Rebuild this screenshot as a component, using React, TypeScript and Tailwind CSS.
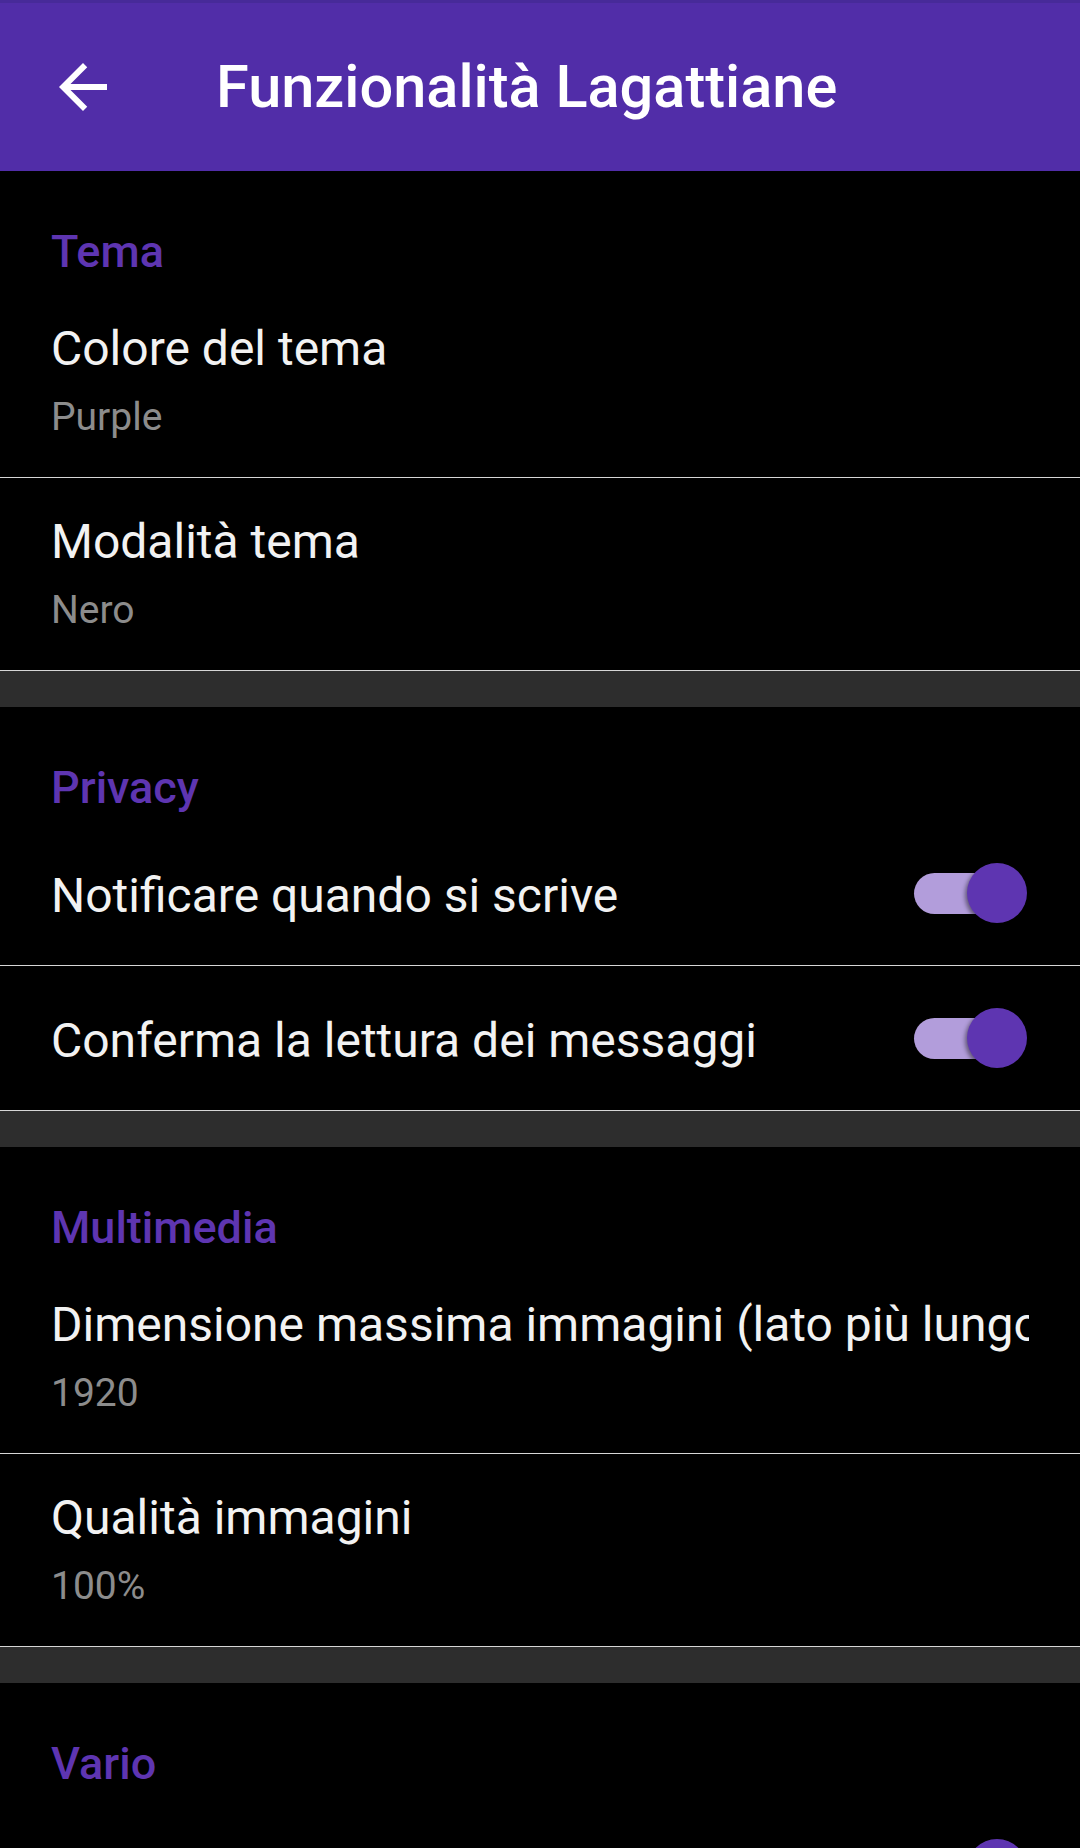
type Pref =
  | { kind: 'text'; title: string; summary: string }
  | { kind: 'switch'; title: string; on: boolean }

type Category = { name: string; items: Pref[] }

const categories: Category[] = [
  {
    name: 'Tema',
    items: [
      { kind: 'text', title: 'Colore del tema', summary: 'Purple' },
      { kind: 'text', title: 'Modalità tema', summary: 'Nero' },
    ],
  },
  {
    name: 'Privacy',
    items: [
      { kind: 'switch', title: 'Notificare quando si scrive', on: true },
      { kind: 'switch', title: 'Conferma la lettura dei messaggi', on: true },
    ],
  },
  {
    name: 'Multimedia',
    items: [
      { kind: 'text', title: 'Dimensione massima immagini (lato più lungo)', summary: '1920' },
      { kind: 'text', title: 'Qualità immagini', summary: '100%' },
    ],
  },
  {
    name: 'Vario',
    // the row's label sits below the visible area, only the switch peeks in
    items: [{ kind: 'switch', title: '', on: true }],
  },
]

function Toggle() {
  return (
    <div className="relative w-[113px] h-[60px] shrink-0">
      <div className="absolute left-0 top-[10px] w-[102px] h-[41px] rounded-full bg-[#b29ddb]" />
      <div className="absolute right-0 top-0 w-[60px] h-[60px] rounded-full bg-[#5e35b1] shadow-[-2px_2px_4px_rgba(0,0,0,0.45)]" />
    </div>
  )
}

function Row({ pref }: { pref: Pref }) {
  if (pref.kind === 'switch') {
    return (
      <div className="h-[144px] flex items-center pl-[51px] pr-[53px]">
        <div className="flex-1 mt-[5px] text-[48px] leading-[56px] text-[#f2f2f2] whitespace-nowrap overflow-hidden">
          {pref.title}
        </div>
        <Toggle />
      </div>
    )
  }
  return (
    <div className="h-[192px] pl-[51px] pr-[51px] pt-[36px]">
      <div className="text-[48px] leading-[56px] text-[#f2f2f2] whitespace-nowrap overflow-hidden">{pref.title}</div>
      <div className="mt-[16px] text-[39px] leading-[48px] text-[#8c8c8c]">{pref.summary}</div>
    </div>
  )
}

export default function App() {
  return (
    <div className="w-[1080px] h-[1848px] overflow-hidden bg-black font-['Roboto','Noto_Sans',sans-serif]">
      <div className="h-[3px] bg-[#472a99]" />
      <header className="h-[168px] bg-[#512da8] flex items-center">
        <svg viewBox="0 0 24 24" className="ml-[47px] w-[72px] h-[72px] fill-white">
          <path d="M20 11H7.83l5.59-5.59L12 4l-8 8 8 8 1.41-1.41L7.83 13H20v-2z" />
        </svg>
        <h1 className="ml-[97px] text-[59.5px] leading-[68px] font-medium text-white">Funzionalità Lagattiane</h1>
      </header>

      {categories.map((cat, i) => (
        <section key={cat.name}>
          {i > 0 && <div className="h-[36px] bg-[#2d2d2d]" />}
          <div className="h-[114px] pl-[51px] pt-[58px] text-[45px] leading-[45px] font-medium text-[#5e35b1]">
            {cat.name}
          </div>
          {cat.items.map((item, j) => (
            <div key={j}>
              <Row pref={item} />
              <div className="h-px bg-[#d6d6d6]" />
            </div>
          ))}
        </section>
      ))}
    </div>
  )
}
